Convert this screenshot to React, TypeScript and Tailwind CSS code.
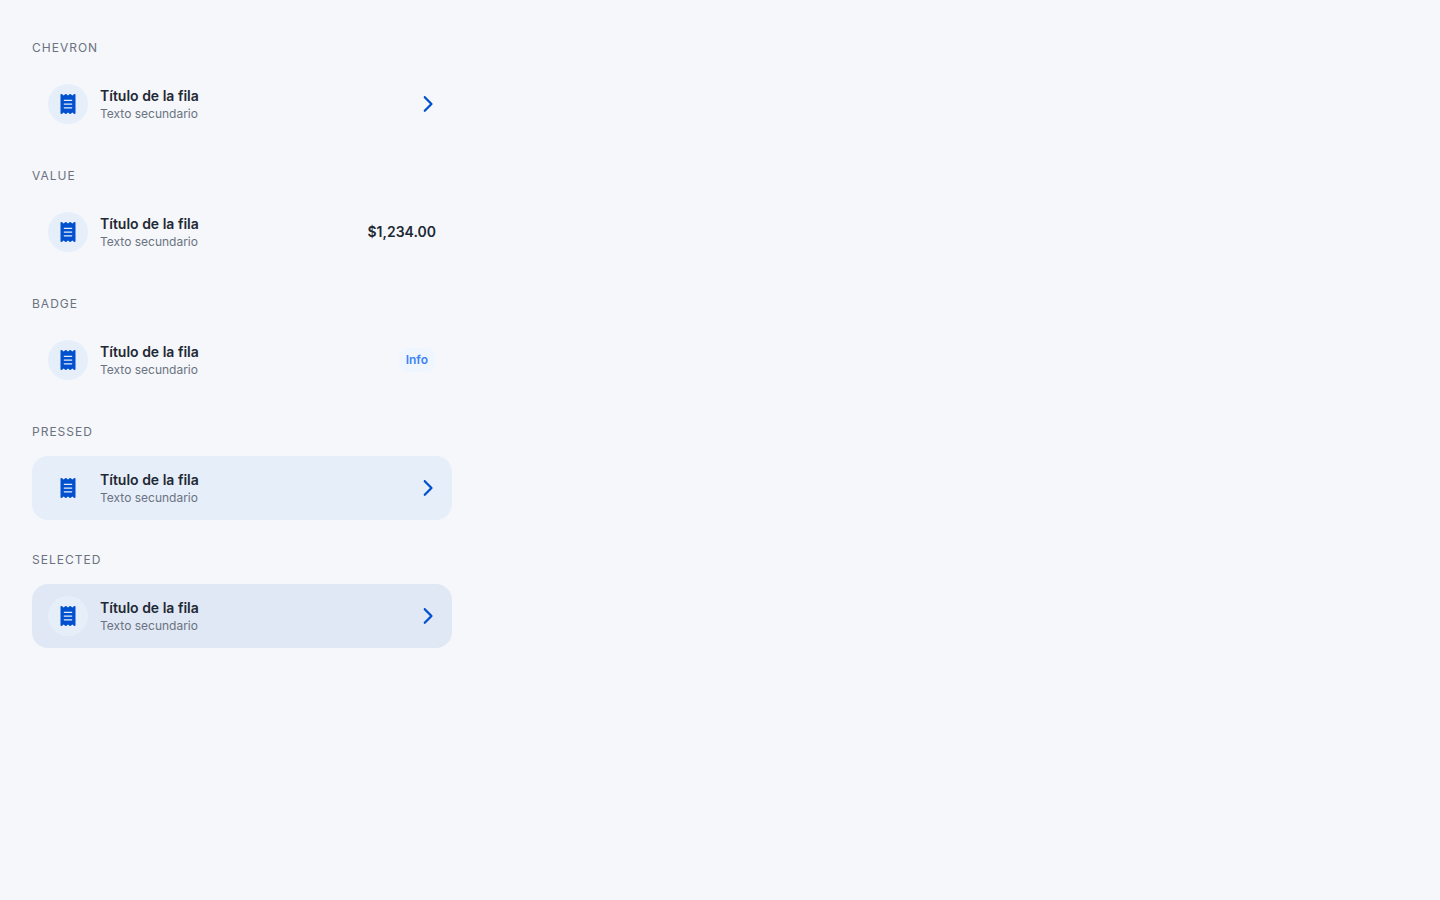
import React, { useId } from 'react';
import { FaChevronRight, FaReceipt } from 'react-icons/fa6';

type Trailing = 'chevron' | 'value' | 'badge';

interface RowProps {
  trailing: Trailing;
  tone?: string;
}

function Row({ trailing, tone = '' }: RowProps) {
  return (
    <button type="button" className={`flex w-full items-center gap-3 rounded-2xl px-4 py-3 text-left ${tone}`}>
      <span className="flex size-10 shrink-0 items-center justify-center rounded-full bg-[#e6eefa] text-[#0050d0]">
        <FaReceipt className="size-5" aria-hidden="true" />
      </span>
      <span className="flex min-w-0 flex-1 flex-col">
        <span className="text-sm leading-5 font-semibold text-[#1f2933]">Título de la fila</span>
        <span className="text-xs leading-4 text-[#6b7280]">Texto secundario</span>
      </span>
      {trailing === 'chevron' && (
        <FaChevronRight className="size-[18px] shrink-0 text-[#0050d0]" aria-hidden="true" />
      )}
      {trailing === 'value' && <span className="text-sm leading-5 font-semibold text-[#1f2933]">$1,234.00</span>}
      {trailing === 'badge' && (
        <span className="rounded-full bg-[#eff6ff] px-2 py-1 text-xs leading-4 font-semibold text-[#3b82f6]">Info</span>
      )}
    </button>
  );
}

function Section({ title, ...row }: RowProps & { title: string }) {
  const id = useId();
  return (
    <section aria-labelledby={id} className="flex flex-col gap-4">
      <h2 id={id} className="text-xs leading-4 font-normal tracking-[1px] text-[#6b7280] uppercase">
        {title}
      </h2>
      <Row {...row} />
    </section>
  );
}

export default function App() {
  return (
    <main className="min-h-screen bg-[#f5f7fb] px-8 py-10 font-['Inter',sans-serif] antialiased">
      <div className="flex max-w-[420px] flex-col gap-8">
        <Section title="Chevron" trailing="chevron" />
        <Section title="Value" trailing="value" />
        <Section title="Badge" trailing="badge" />
        <Section title="Pressed" trailing="chevron" tone="bg-[#e6eefa]" />
        <Section title="Selected" trailing="chevron" tone="bg-[#e0e8f5]" />
      </div>
    </main>
  );
}
